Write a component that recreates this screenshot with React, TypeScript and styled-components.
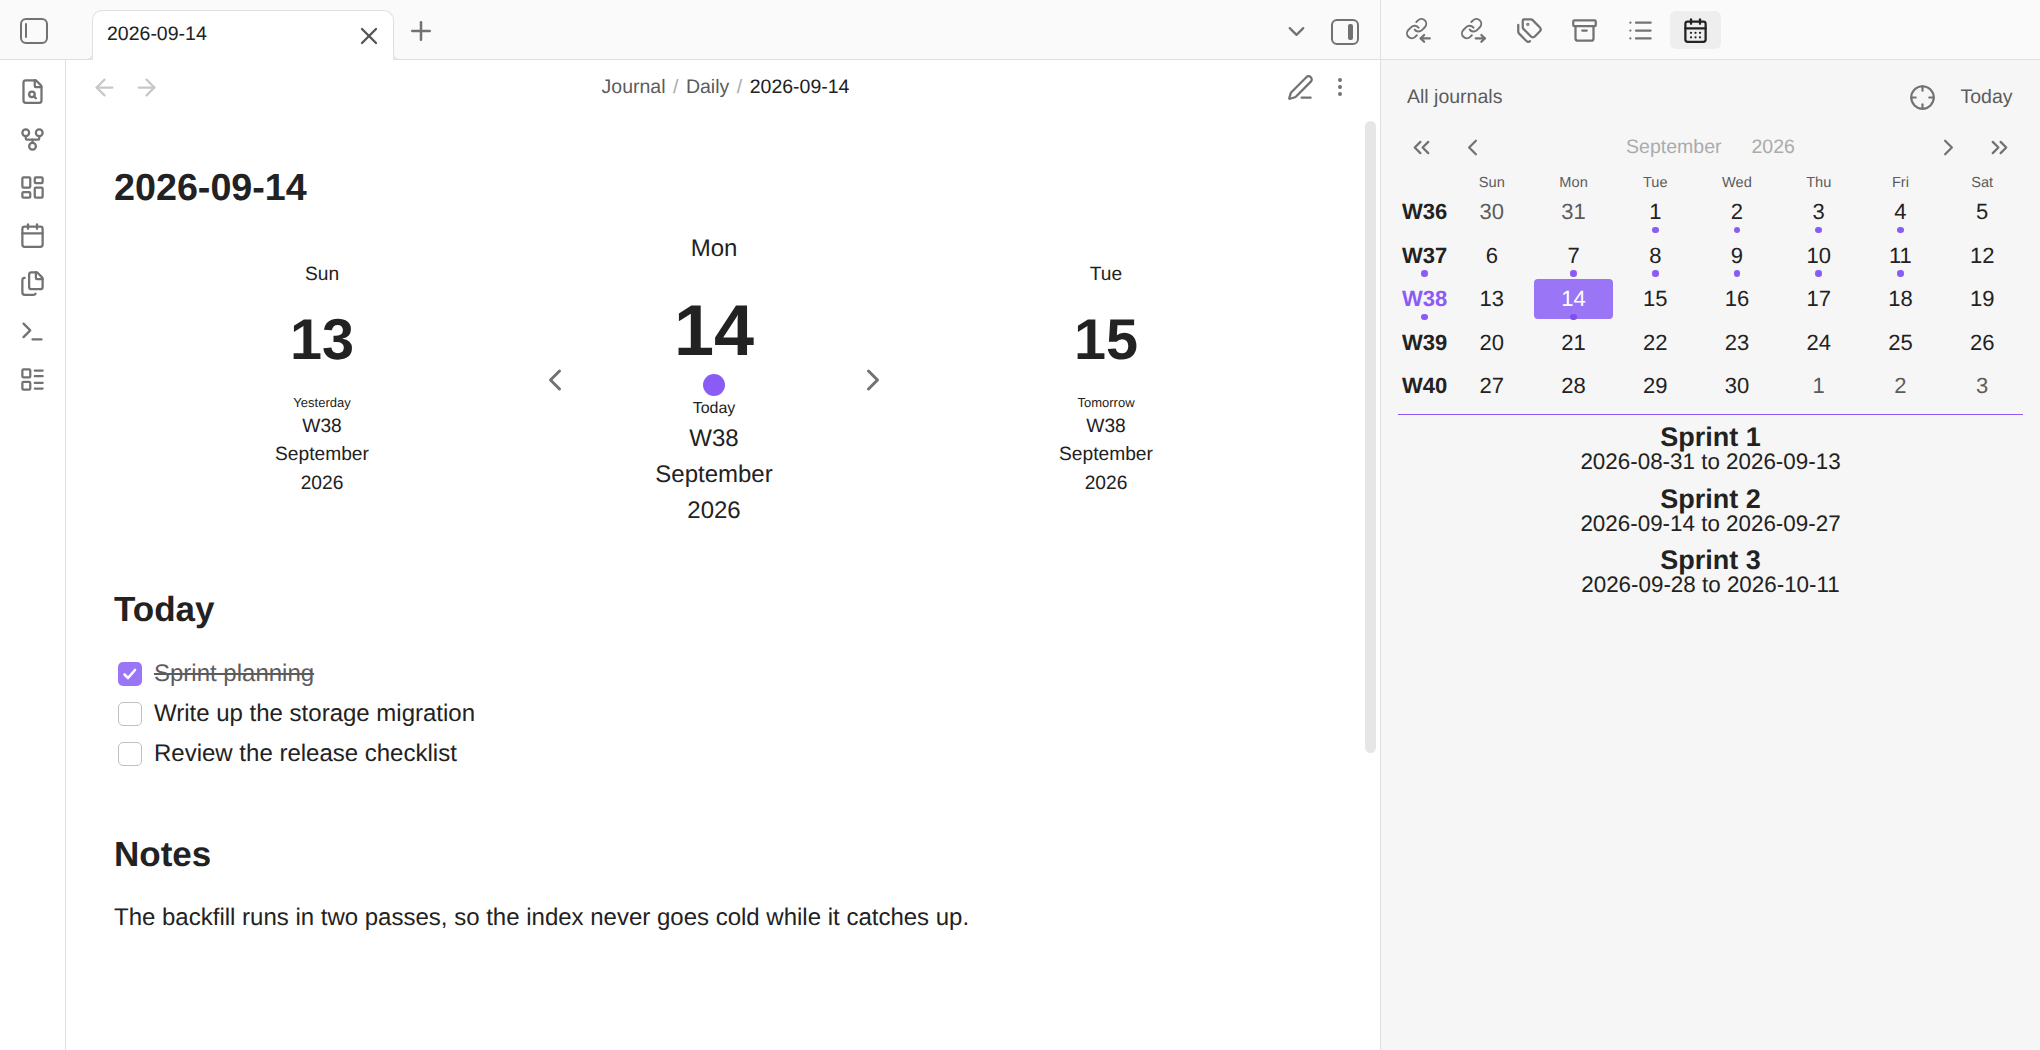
import React from 'react'
import styled, { createGlobalStyle } from 'styled-components'
import {
  Archive,
  ArrowLeft,
  ArrowRight,
  Calendar,
  CalendarDays,
  ChevronDown,
  ChevronLeft,
  ChevronRight,
  ChevronsLeft,
  ChevronsRight,
  Crosshair,
  EllipsisVertical,
  FileSearch,
  Files,
  GitFork,
  LayoutDashboard,
  LayoutList,
  List,
  PenLine,
  Plus,
  Tags,
  Terminal,
  X,
} from 'lucide-react'

const GlobalStyle = createGlobalStyle`
  html, body {
    margin: 0;
    padding: 0;
    background: #fff;
    color: #222;
    font-family: "Liberation Sans", Arial, sans-serif;
    text-rendering: geometricPrecision;
  }
  * {
    box-sizing: border-box;
  }
`

const ICON = '#727272'
const BORDER = '#e0e0e0'
const ACCENT = '#8a5cf5'

const LinkArrowIcon = ({ out }: { out?: boolean }) => (
  <svg width="27" height="27" viewBox="0 0 24 24" fill="none" stroke="currentColor" strokeWidth="2" strokeLinecap="round" strokeLinejoin="round">
    <g transform="scale(0.86)">
      <path d="M10 13a5 5 0 0 0 7.54.54l3-3a5 5 0 0 0-7.07-7.07l-1.72 1.71" />
      <path d="M14 11a5 5 0 0 0-7.54-.54l-3 3a5 5 0 0 0 7.07 7.07l1.71-1.71" />
    </g>
    <path d="M14 19h8" />
    {out ? <path d="M19 16l3 3-3 3" /> : <path d="M17 16l-3 3 3 3" />}
  </svg>
)

const SidebarLeftIcon = () => (
  <svg width="28" height="26" viewBox="0 0 28 26" fill="none" stroke="currentColor" strokeWidth="2" strokeLinecap="round">
    <rect x="1" y="1" width="26" height="24" rx="5" />
    <path d="M6 6v13" />
  </svg>
)

const SidebarRightIcon = () => (
  <svg width="28" height="26" viewBox="0 0 28 26" fill="none" stroke="currentColor" strokeWidth="2">
    <rect x="1" y="1" width="26" height="24" rx="5" />
    <rect x="17" y="5" width="5" height="16" rx="2" fill="currentColor" stroke="none" />
  </svg>
)

const App = () => {
  const weeks = [
    { label: 'W36', days: [[30, 1], [31, 1], [1], [2], [3], [4], [5]], dots: [2, 3, 4, 5] },
    { label: 'W37', days: [[6], [7], [8], [9], [10], [11], [12]], dots: [1, 2, 3, 4, 5], weekDot: true },
    { label: 'W38', days: [[13], [14], [15], [16], [17], [18], [19]], dots: [1], weekDot: true, current: true },
    { label: 'W39', days: [[20], [21], [22], [23], [24], [25], [26]], dots: [] },
    { label: 'W40', days: [[27], [28], [29], [30], [1, 1], [2, 1], [3, 1]], dots: [] },
  ]
  const sprints = [
    ['Sprint 1', '2026-08-31 to 2026-09-13'],
    ['Sprint 2', '2026-09-14 to 2026-09-27'],
    ['Sprint 3', '2026-09-28 to 2026-10-11'],
  ]

  return (
    <Page>
      <GlobalStyle />
      <Main>
        <TabBar>
          <TabBarStart>
            <SidebarLeftIcon />
          </TabBarStart>
          <Tab>
            <TabTitle>2026-09-14</TabTitle>
            <TabClose>
              <X size={28} strokeWidth={2} />
            </TabClose>
          </Tab>
          <NewTab>
            <Plus size={30} strokeWidth={2} />
          </NewTab>
          <TabBarEnd>
            <ChevronDown size={27} strokeWidth={2} />
            <SidebarRightIcon />
          </TabBarEnd>
        </TabBar>
        <Body>
          <Ribbon>
            <RibbonIcon><FileSearch size={27} strokeWidth={2} /></RibbonIcon>
            <RibbonIcon><GitFork size={27} strokeWidth={2} /></RibbonIcon>
            <RibbonIcon><LayoutDashboard size={27} strokeWidth={2} /></RibbonIcon>
            <RibbonIcon><Calendar size={27} strokeWidth={2} /></RibbonIcon>
            <RibbonIcon><Files size={27} strokeWidth={2} /></RibbonIcon>
            <RibbonIcon><Terminal size={27} strokeWidth={2} /></RibbonIcon>
            <RibbonIcon><LayoutList size={27} strokeWidth={2} /></RibbonIcon>
          </Ribbon>
          <Editor>
            <ViewHeader>
              <NavGroup>
                <ArrowLeft size={27} strokeWidth={2} />
                <ArrowRight size={27} strokeWidth={2} />
              </NavGroup>
              <Crumbs>
                <Crumb>Journal</Crumb>
                <CrumbSep>/</CrumbSep>
                <Crumb>Daily</Crumb>
                <CrumbSep>/</CrumbSep>
                <Crumb $current>2026-09-14</Crumb>
              </Crumbs>
              <ViewActions>
                <PenLine size={27} strokeWidth={2} />
                <EllipsisVertical size={24} strokeWidth={2} />
              </ViewActions>
            </ViewHeader>
            <Note>
              <NoteTitle>2026-09-14</NoteTitle>
              <DayRow>
                <DayColumn $side>
                  <span>Sun</span>
                  <DayNumber $side>13</DayNumber>
                  <DayCaption $side>Yesterday</DayCaption>
                  <span>W38</span>
                  <span>September</span>
                  <span>2026</span>
                </DayColumn>
                <DayArrow><ChevronLeft size={36} strokeWidth={2} /></DayArrow>
                <DayColumn>
                  <span>Mon</span>
                  <DayNumber>14</DayNumber>
                  <TodayDot />
                  <DayCaption>Today</DayCaption>
                  <span>W38</span>
                  <span>September</span>
                  <span>2026</span>
                </DayColumn>
                <DayArrow><ChevronRight size={36} strokeWidth={2} /></DayArrow>
                <DayColumn $side>
                  <span>Tue</span>
                  <DayNumber $side>15</DayNumber>
                  <DayCaption $side>Tomorrow</DayCaption>
                  <span>W38</span>
                  <span>September</span>
                  <span>2026</span>
                </DayColumn>
              </DayRow>
              <SectionTitle $top={59}>Today</SectionTitle>
              <TaskList>
                <Task>
                  <Check $done>
                    <svg width="16" height="16" viewBox="0 0 16 16" fill="none" stroke="#fff" strokeWidth="2.6" strokeLinecap="round" strokeLinejoin="round">
                      <path d="M2.5 8.5l3.5 3.5 7-8" />
                    </svg>
                  </Check>
                  <TaskText $done>Sprint planning</TaskText>
                </Task>
                <Task>
                  <Check />
                  <TaskText>Write up the storage migration</TaskText>
                </Task>
                <Task>
                  <Check />
                  <TaskText>Review the release checklist</TaskText>
                </Task>
              </TaskList>
              <SectionTitle $top={59}>Notes</SectionTitle>
              <Paragraph>The backfill runs in two passes, so the index never goes cold while it catches up.</Paragraph>
            </Note>
            <ScrollThumb />
          </Editor>
        </Body>
      </Main>
      <Side>
        <SideToolbar>
          <SideTool><LinkArrowIcon /></SideTool>
          <SideTool><LinkArrowIcon out /></SideTool>
          <SideTool><Tags size={27} strokeWidth={2} /></SideTool>
          <SideTool><Archive size={27} strokeWidth={2} /></SideTool>
          <SideTool><List size={27} strokeWidth={2} /></SideTool>
          <SideTool $active><CalendarDays size={27} strokeWidth={2} /></SideTool>
        </SideToolbar>
        <SideContent>
          <JournalBar>
            <span>All journals</span>
            <JournalActions>
              <Crosshair size={27} strokeWidth={1.9} />
              <span>Today</span>
            </JournalActions>
          </JournalBar>
          <MonthBar>
            <MonthNav>
              <ChevronsLeft size={27} strokeWidth={2} />
              <ChevronLeft size={27} strokeWidth={2} />
            </MonthNav>
            <MonthTitle>
              <span>September</span>
              <span>2026</span>
            </MonthTitle>
            <MonthNav>
              <ChevronRight size={27} strokeWidth={2} />
              <ChevronsRight size={27} strokeWidth={2} />
            </MonthNav>
          </MonthBar>
          <CalendarGrid>
            <span />
            {['Sun', 'Mon', 'Tue', 'Wed', 'Thu', 'Fri', 'Sat'].map((d) => (
              <WeekdayHead key={d}>{d}</WeekdayHead>
            ))}
            {weeks.map((w) => (
              <React.Fragment key={w.label}>
                <WeekCell $current={w.current}>
                  {w.label}
                  {w.weekDot && <CellDot />}
                </WeekCell>
                {w.days.map(([n, other], i) => {
                  const isToday = w.current && n === 14
                  return (
                    <DayCell key={i} $other={!!other} $today={isToday}>
                      {n}
                      {w.dots.includes(i) && <CellDot $today={isToday} />}
                    </DayCell>
                  )
                })}
              </React.Fragment>
            ))}
          </CalendarGrid>
          <Sprints>
            {sprints.map(([name, range]) => (
              <Sprint key={name}>
                <SprintName>{name}</SprintName>
                <SprintRange>{range}</SprintRange>
              </Sprint>
            ))}
          </Sprints>
        </SideContent>
      </Side>
    </Page>
  )
}

export default App

const Page = styled.div`
  display: flex;
  width: 2040px;
  height: 1050px;
  overflow: hidden;
`

const Main = styled.div`
  display: flex;
  flex-direction: column;
  width: 1381px;
  border-right: 1.5px solid ${BORDER};
`

const TabBar = styled.div`
  display: flex;
  align-items: flex-start;
  height: 60px;
  background: #fafafa;
  border-bottom: 1.5px solid ${BORDER};
`

const TabBarStart = styled.div`
  display: flex;
  width: 92px;
  padding: 18px 0 0 20px;
  color: ${ICON};
`

const Tab = styled.div`
  position: relative;
  display: flex;
  align-items: flex-start;
  justify-content: space-between;
  width: 302px;
  height: 50px;
  margin-top: 10px;
  padding: 10.5px 10px 0 14px;
  background: #fff;
  border: 1.5px solid ${BORDER};
  border-bottom: none;
  border-radius: 10px 10px 0 0;

  &::before,
  &::after {
    content: '';
    position: absolute;
    bottom: 0;
    width: 6px;
    height: 6px;
    border-bottom: 1.5px solid ${BORDER};
  }
  &::before {
    left: -7px;
    border-right: 1.5px solid ${BORDER};
    border-bottom-right-radius: 6px;
  }
  &::after {
    right: -7px;
    border-left: 1.5px solid ${BORDER};
    border-bottom-left-radius: 6px;
  }
`

const TabTitle = styled.span`
  font-size: 19.5px;
  line-height: 24px;
  color: #222;
`

const TabClose = styled.span`
  display: flex;
  color: #555;
`

const NewTab = styled.div`
  display: flex;
  margin: 16px 0 0 12px;
  color: ${ICON};
`

const TabBarEnd = styled.div`
  display: flex;
  align-items: center;
  gap: 21px;
  margin-left: auto;
  padding: 18px 21px 0 0;
  color: ${ICON};
`

const Body = styled.div`
  display: flex;
  flex: 1;
  min-height: 0;
`

const Ribbon = styled.div`
  display: flex;
  flex-direction: column;
  align-items: center;
  width: 66px;
  padding-top: 7.5px;
  border-right: 1.5px solid ${BORDER};
`

const RibbonIcon = styled.div`
  display: flex;
  align-items: center;
  justify-content: center;
  height: 48px;
  color: ${ICON};
`

const Editor = styled.div`
  position: relative;
  flex: 1;
  min-width: 0;
`

const ViewHeader = styled.div`
  display: grid;
  grid-template-columns: 1fr auto 1fr;
  align-items: center;
  height: 54px;
  padding: 0 20px 0 25px;
`

const NavGroup = styled.div`
  display: flex;
  gap: 15px;
  color: #c8c8c8;
`

const Crumbs = styled.div`
  display: flex;
  align-items: center;
  font-size: 19.5px;
`

const Crumb = styled.span<{ $current?: boolean }>`
  color: ${(p) => (p.$current ? '#222' : '#5c5c5c')};
`

const CrumbSep = styled.span`
  margin: 0 7.5px;
  color: #ababab;
`

const ViewActions = styled.div`
  display: flex;
  align-items: center;
  justify-content: flex-end;
  gap: 14px;
  padding-right: 8px;
  color: ${ICON};
`

const Note = styled.div`
  padding: 50px 66px 0 48px;
`

const NoteTitle = styled.h1`
  margin: 0;
  font-size: 37.7px;
  line-height: 46px;
  font-weight: 700;
  color: #222;
`

const DayRow = styled.div`
  display: grid;
  grid-template-columns: 1fr 50px 268px 50px 1fr;
  align-items: center;
  margin-top: 21px;
`

const DayColumn = styled.div<{ $side?: boolean }>`
  display: flex;
  flex-direction: column;
  align-items: center;
  font-size: ${(p) => (p.$side ? '19.2px' : '24px')};
  line-height: 1.5;
  color: #222;
`

const DayNumber = styled.div<{ $side?: boolean }>`
  margin-top: ${(p) => (p.$side ? '22px' : '28px')};
  margin-bottom: ${(p) => (p.$side ? '23px' : '7px')};
  font-size: ${(p) => (p.$side ? '57.6px' : '72px')};
  line-height: 1;
  font-weight: 700;
`

const TodayDot = styled.div`
  width: 22px;
  height: 22px;
  border-radius: 50%;
  background: ${ACCENT};
`

const DayCaption = styled.div<{ $side?: boolean }>`
  font-size: ${(p) => (p.$side ? '13px' : '16px')};
  line-height: ${(p) => (p.$side ? '20px' : '25px')};
`

const DayArrow = styled.div`
  display: flex;
  justify-content: center;
  color: ${ICON};
`

const SectionTitle = styled.h2<{ $top: number }>`
  margin: ${(p) => p.$top}px 0 0;
  font-size: 35px;
  line-height: 44px;
  font-weight: 700;
  color: #222;
`

const TaskList = styled.div`
  display: flex;
  flex-direction: column;
  margin-top: 22px;
  padding-left: 4px;
`

const Task = styled.div`
  display: flex;
  align-items: center;
  gap: 12px;
  height: 40px;
`

const Check = styled.span<{ $done?: boolean }>`
  display: flex;
  align-items: center;
  justify-content: center;
  width: 24px;
  height: 24px;
  border-radius: 5px;
  background: ${(p) => (p.$done ? '#9a76f6' : '#fff')};
  border: ${(p) => (p.$done ? 'none' : '1.5px solid #c0c0c0')};
`

const TaskText = styled.span<{ $done?: boolean }>`
  font-size: 24px;
  line-height: 36px;
  color: ${(p) => (p.$done ? '#5c5c5c' : '#222')};
  text-decoration: ${(p) => (p.$done ? 'line-through' : 'none')};
`

const Paragraph = styled.p`
  margin: 23px 0 0;
  font-size: 24px;
  line-height: 36px;
  color: #222;
`

const ScrollThumb = styled.div`
  position: absolute;
  top: 61px;
  right: 4px;
  width: 11px;
  height: 632px;
  border-radius: 6px;
  background: #e6e6e6;
`

const Side = styled.div`
  display: flex;
  flex-direction: column;
  flex: 1;
  min-width: 0;
`

const SideToolbar = styled.div`
  display: flex;
  align-items: flex-start;
  height: 60px;
  padding: 11px 0 0 11.5px;
  background: #fafafa;
  border-bottom: 1.5px solid ${BORDER};
`

const SideTool = styled.div<{ $active?: boolean }>`
  display: flex;
  align-items: center;
  justify-content: center;
  width: 51px;
  height: 38px;
  margin-right: 4.5px;
  border-radius: 6px;
  background: ${(p) => (p.$active ? '#eeeeee' : 'transparent')};
  color: ${(p) => (p.$active ? '#222' : ICON)};
`

const SideContent = styled.div`
  flex: 1;
  padding: 0 17px;
  background: #f6f6f6;
`

const JournalBar = styled.div`
  display: flex;
  align-items: center;
  justify-content: space-between;
  height: 36px;
  margin-top: 19.5px;
  padding: 0 10.5px 0 9px;
  font-size: 19.5px;
  color: #5c5c5c;
`

const JournalActions = styled.div`
  display: flex;
  align-items: center;
  gap: 24px;
  color: #5c5c5c;

  svg {
    color: ${ICON};
  }
`

const MonthBar = styled.div`
  display: flex;
  align-items: center;
  justify-content: space-between;
  height: 36px;
  margin-top: 13.5px;
  padding: 0 10px;
`

const MonthNav = styled.div`
  display: flex;
  gap: 24px;
  color: ${ICON};
`

const MonthTitle = styled.div`
  display: flex;
  gap: 30px;
  font-size: 19.5px;
  color: #ababab;
`

const CalendarGrid = styled.div`
  display: grid;
  grid-template-columns: 53px repeat(7, 1fr);
  grid-template-rows: 11px repeat(5, 40px);
  row-gap: 3.5px;
  align-items: center;
  justify-items: center;
  margin-top: 12.5px;
  padding-bottom: 8px;
  border-bottom: 1.5px solid ${ACCENT};
`

const WeekdayHead = styled.div`
  font-size: 14.6px;
  color: #5c5c5c;
`

const WeekCell = styled.div<{ $current?: boolean }>`
  position: relative;
  display: flex;
  align-items: center;
  justify-content: center;
  width: 100%;
  height: 40px;
  font-size: 22px;
  font-weight: 700;
  color: ${(p) => (p.$current ? ACCENT : '#222')};
`

const DayCell = styled.div<{ $other?: boolean; $today?: boolean }>`
  position: relative;
  display: flex;
  align-items: center;
  justify-content: center;
  width: 79px;
  height: 40px;
  border-radius: 4px;
  font-size: 22px;
  color: ${(p) => (p.$today ? '#fff' : p.$other ? '#5c5c5c' : '#222')};
  background: ${(p) => (p.$today ? '#9a76f6' : 'transparent')};
`

const CellDot = styled.span<{ $today?: boolean }>`
  position: absolute;
  left: 50%;
  bottom: -1px;
  width: 6.5px;
  height: 6.5px;
  margin-left: -3.25px;
  border-radius: 50%;
  background: ${(p) => (p.$today ? '#7f50ea' : ACCENT)};
`

const Sprints = styled.div`
  display: flex;
  flex-direction: column;
  gap: 12.5px;
  padding-top: 9px;
  text-align: center;
`

const Sprint = styled.div`
  display: flex;
  flex-direction: column;
`

const SprintName = styled.div`
  font-size: 27px;
  line-height: 27px;
  font-weight: 700;
  color: #222;
`

const SprintRange = styled.div`
  margin-top: -1px;
  font-size: 22.4px;
  line-height: 23px;
  color: #222;
`
